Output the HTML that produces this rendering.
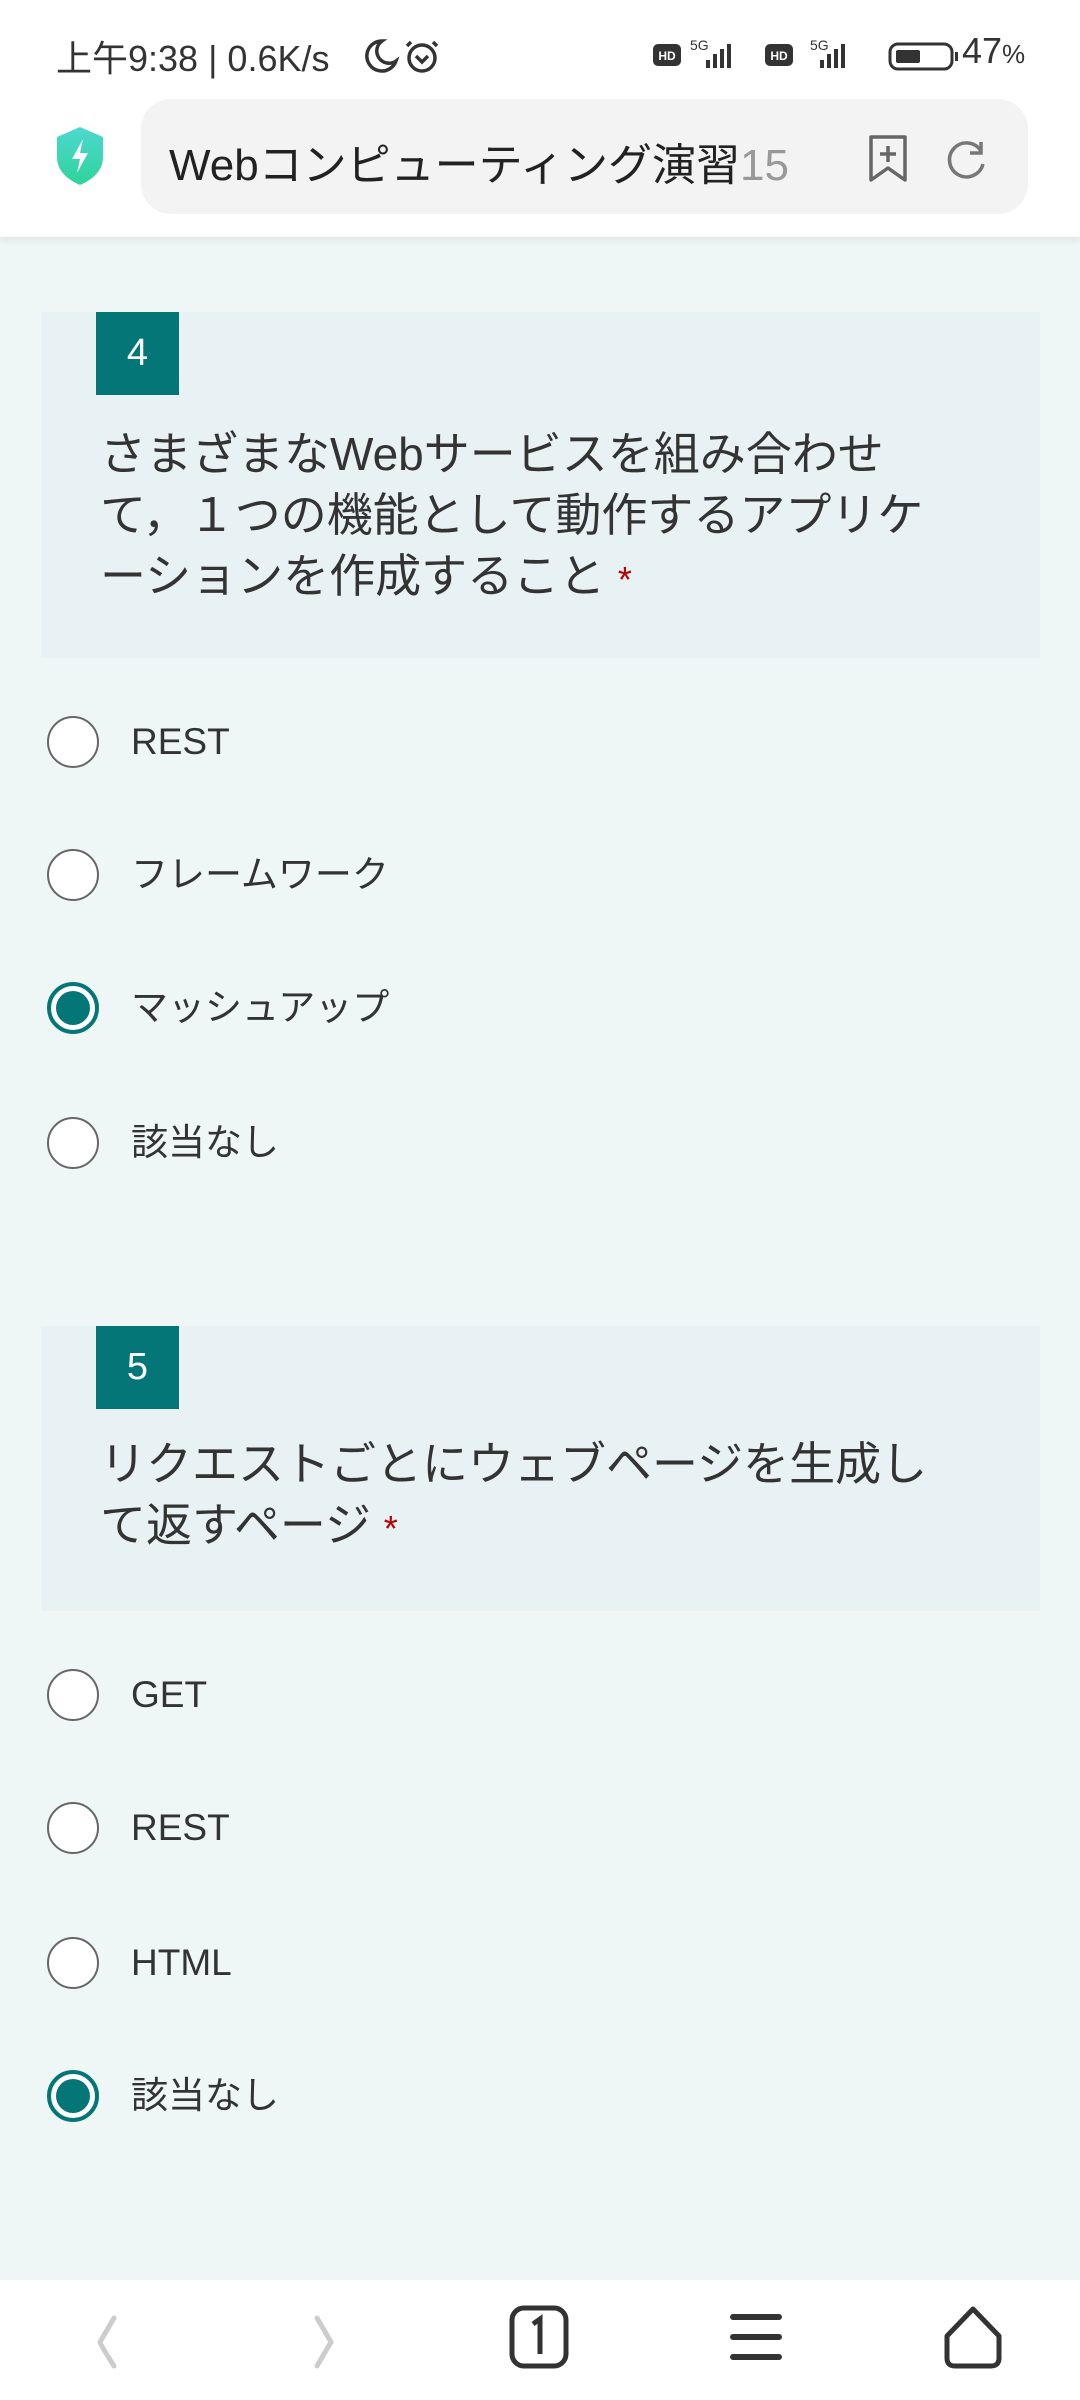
<!DOCTYPE html>
<html><head><meta charset="utf-8"><style>
*{margin:0;padding:0;box-sizing:border-box}
body{width:1080px;height:2400px;background:#eef6f6;font-family:"Liberation Sans","Noto Sans CJK JP",sans-serif;position:relative;overflow:hidden;color:#333}
.hdr{position:absolute;left:0;top:0;width:1080px;height:237px;background:#fff;box-shadow:0 3px 8px rgba(0,0,0,.08)}
.sb{position:absolute;top:30px;font-size:36px;color:#333}
.url{position:absolute;left:141px;top:99px;width:887px;height:115px;background:#f3f3f3;border-radius:30px}
.url span{position:absolute;left:28px;top:30px;font-size:44px;color:#222}
.card{position:absolute;left:41px;width:999px;background:#e8f1f3}
.badge{position:absolute;left:55px;top:0;width:83px;height:83px;background:#047677;color:#fff;font-size:38px;text-align:center;line-height:83px}
.q{position:absolute;left:59px;font-size:46px;line-height:61px;color:#333;width:920px}
.star{color:#b00;font-size:36px}
.opt{position:absolute;left:47px;height:52px;font-size:37px;line-height:52px;color:#333}
.opt i{position:absolute;left:0;top:0;width:52px;height:52px;border:2.5px solid #666;border-radius:50%;background:#fff}
.opt.on i{border:4px solid #047677;background:#fff}
.opt.on i:after{content:"";position:absolute;left:5px;top:5px;width:34px;height:34px;border-radius:50%;background:#047677}
.opt b{font-weight:normal;position:absolute;left:84px;white-space:nowrap}
.nav{position:absolute;left:0;top:2280px;width:1080px;height:120px;background:#fff}
</style></head><body>
<div class="hdr">
<div class="sb" style="left:56px">上午9:38 | 0.6K/s</div>
<svg style="position:absolute;left:364px;top:36px" width="80" height="40" viewBox="0 0 80 40"><path d="M18 5a15 15 0 1 0 14 20a12 12 0 0 1-14-20z" fill="none" stroke="#333" stroke-width="3.5"/><circle cx="58" cy="22" r="13" fill="none" stroke="#333" stroke-width="3.5"/><path d="M52 20l6 6l6-6M47 6l-4 4M69 6l4 4" stroke="#333" stroke-width="3.5" fill="none"/></svg>
<svg style="position:absolute;left:650px;top:36px" width="380" height="40" viewBox="0 0 380 40"><rect x="3" y="8" width="28" height="22" rx="5" fill="#333"/><text x="17" y="24" font-size="12" fill="#fff" text-anchor="middle" font-family="Liberation Sans" font-weight="bold">HD</text><text x="40" y="14" font-size="14" fill="#333" font-family="Liberation Sans">5G</text><rect x="56" y="24" width="4" height="8" fill="#333"/><rect x="63" y="18" width="4" height="14" fill="#333"/><rect x="70" y="13" width="4" height="19" fill="#333"/><rect x="77" y="8" width="4" height="24" fill="#333"/><rect x="115" y="8" width="28" height="22" rx="5" fill="#333"/><text x="129" y="24" font-size="12" fill="#fff" text-anchor="middle" font-family="Liberation Sans" font-weight="bold">HD</text><text x="160" y="14" font-size="14" fill="#333" font-family="Liberation Sans">5G</text><rect x="170" y="24" width="4" height="8" fill="#333"/><rect x="177" y="18" width="4" height="14" fill="#333"/><rect x="184" y="13" width="4" height="19" fill="#333"/><rect x="191" y="8" width="4" height="24" fill="#333"/><rect x="240" y="8" width="62" height="25" rx="8" fill="none" stroke="#333" stroke-width="3"/><rect x="246" y="14" width="24" height="13" rx="2" fill="#333"/><rect x="305" y="16" width="3" height="9" fill="#333"/></svg>
<div class="sb" style="left:962px">47<span style="font-size:26px">%</span></div>
<svg style="position:absolute;left:55px;top:127px" width="50" height="58" viewBox="0 0 50 58"><defs><linearGradient id="g" x1="0" y1="0" x2="0" y2="1"><stop offset="0" stop-color="#4dd8d0"/><stop offset="1" stop-color="#2fd39a"/></linearGradient></defs><path d="M25 0L48 10V30Q48 48 25 58Q2 48 2 30V10Z" fill="url(#g)"/><path d="M28 12L17 32H25L22 46L33 26H25Z" fill="#fff"/></svg>
<div class="url"><span>Webコンピューティング演習<span style="color:#999;position:static">15</span></span>
<svg style="position:absolute;left:725px;top:35px" width="46" height="50" viewBox="0 0 46 50"><path d="M5 3H39V46L22 34L5 46Z" fill="none" stroke="#666" stroke-width="3.5" stroke-linejoin="round"/><path d="M22 12V28M14 20H30" stroke="#666" stroke-width="3.5"/></svg>
<svg style="position:absolute;left:800px;top:35px" width="50" height="50" viewBox="0 0 50 50"><path d="M40 17A17 17 0 1 0 42 30" fill="none" stroke="#777" stroke-width="3.5"/><path d="M40 8V19H29" fill="none" stroke="#777" stroke-width="3.5"/></svg>
</div>
</div>

<div class="card" style="top:312px;height:346px"><div class="badge">4</div>
<div class="q" style="top:112px">さまざまなWebサービスを組み合わせ<br>て，１つの機能として動作するアプリケ<br>ーションを作成すること <span class="star">*</span></div></div>
<div class="opt" style="top:716px"><i></i><b>REST</b></div>
<div class="opt" style="top:849px"><i></i><b>フレームワーク</b></div>
<div class="opt on" style="top:982px"><i></i><b>マッシュアップ</b></div>
<div class="opt" style="top:1117px"><i></i><b>該当なし</b></div>

<div class="card" style="top:1326px;height:285px"><div class="badge">5</div>
<div class="q" style="top:108px">リクエストごとにウェブページを生成し<br>て返すページ <span class="star">*</span></div></div>
<div class="opt" style="top:1669px"><i></i><b>GET</b></div>
<div class="opt" style="top:1802px"><i></i><b>REST</b></div>
<div class="opt" style="top:1937px"><i></i><b>HTML</b></div>
<div class="opt on" style="top:2070px"><i></i><b>該当なし</b></div>

<div class="nav">
<svg style="position:absolute;left:92px;top:34px" width="30" height="56" viewBox="0 0 30 56"><path d="M22 4Q8 28 8 28Q8 30 22 52" fill="none" stroke="#ccc" stroke-width="5" stroke-linecap="round"/></svg>
<svg style="position:absolute;left:309px;top:34px" width="30" height="56" viewBox="0 0 30 56"><path d="M8 4L22 28L8 52" fill="none" stroke="#ccc" stroke-width="5" stroke-linecap="round"/></svg>
<svg style="position:absolute;left:508px;top:24px" width="64" height="66" viewBox="0 0 64 66"><rect x="4" y="4" width="54" height="58" rx="12" fill="none" stroke="#333" stroke-width="5"/><path d="M25 20L32 15V50" fill="none" stroke="#333" stroke-width="5"/></svg>
<svg style="position:absolute;left:728px;top:32px" width="56" height="50" viewBox="0 0 56 50"><path d="M5 5H51M5 25H51M5 45H51" stroke="#333" stroke-width="6" stroke-linecap="round"/></svg>
<svg style="position:absolute;left:940px;top:24px" width="66" height="66" viewBox="0 0 66 66"><path d="M33 5L59 32V54Q59 62 51 62H15Q7 62 7 54V32Z" fill="none" stroke="#333" stroke-width="5" stroke-linejoin="round"/></svg>
</div>
</body></html>
